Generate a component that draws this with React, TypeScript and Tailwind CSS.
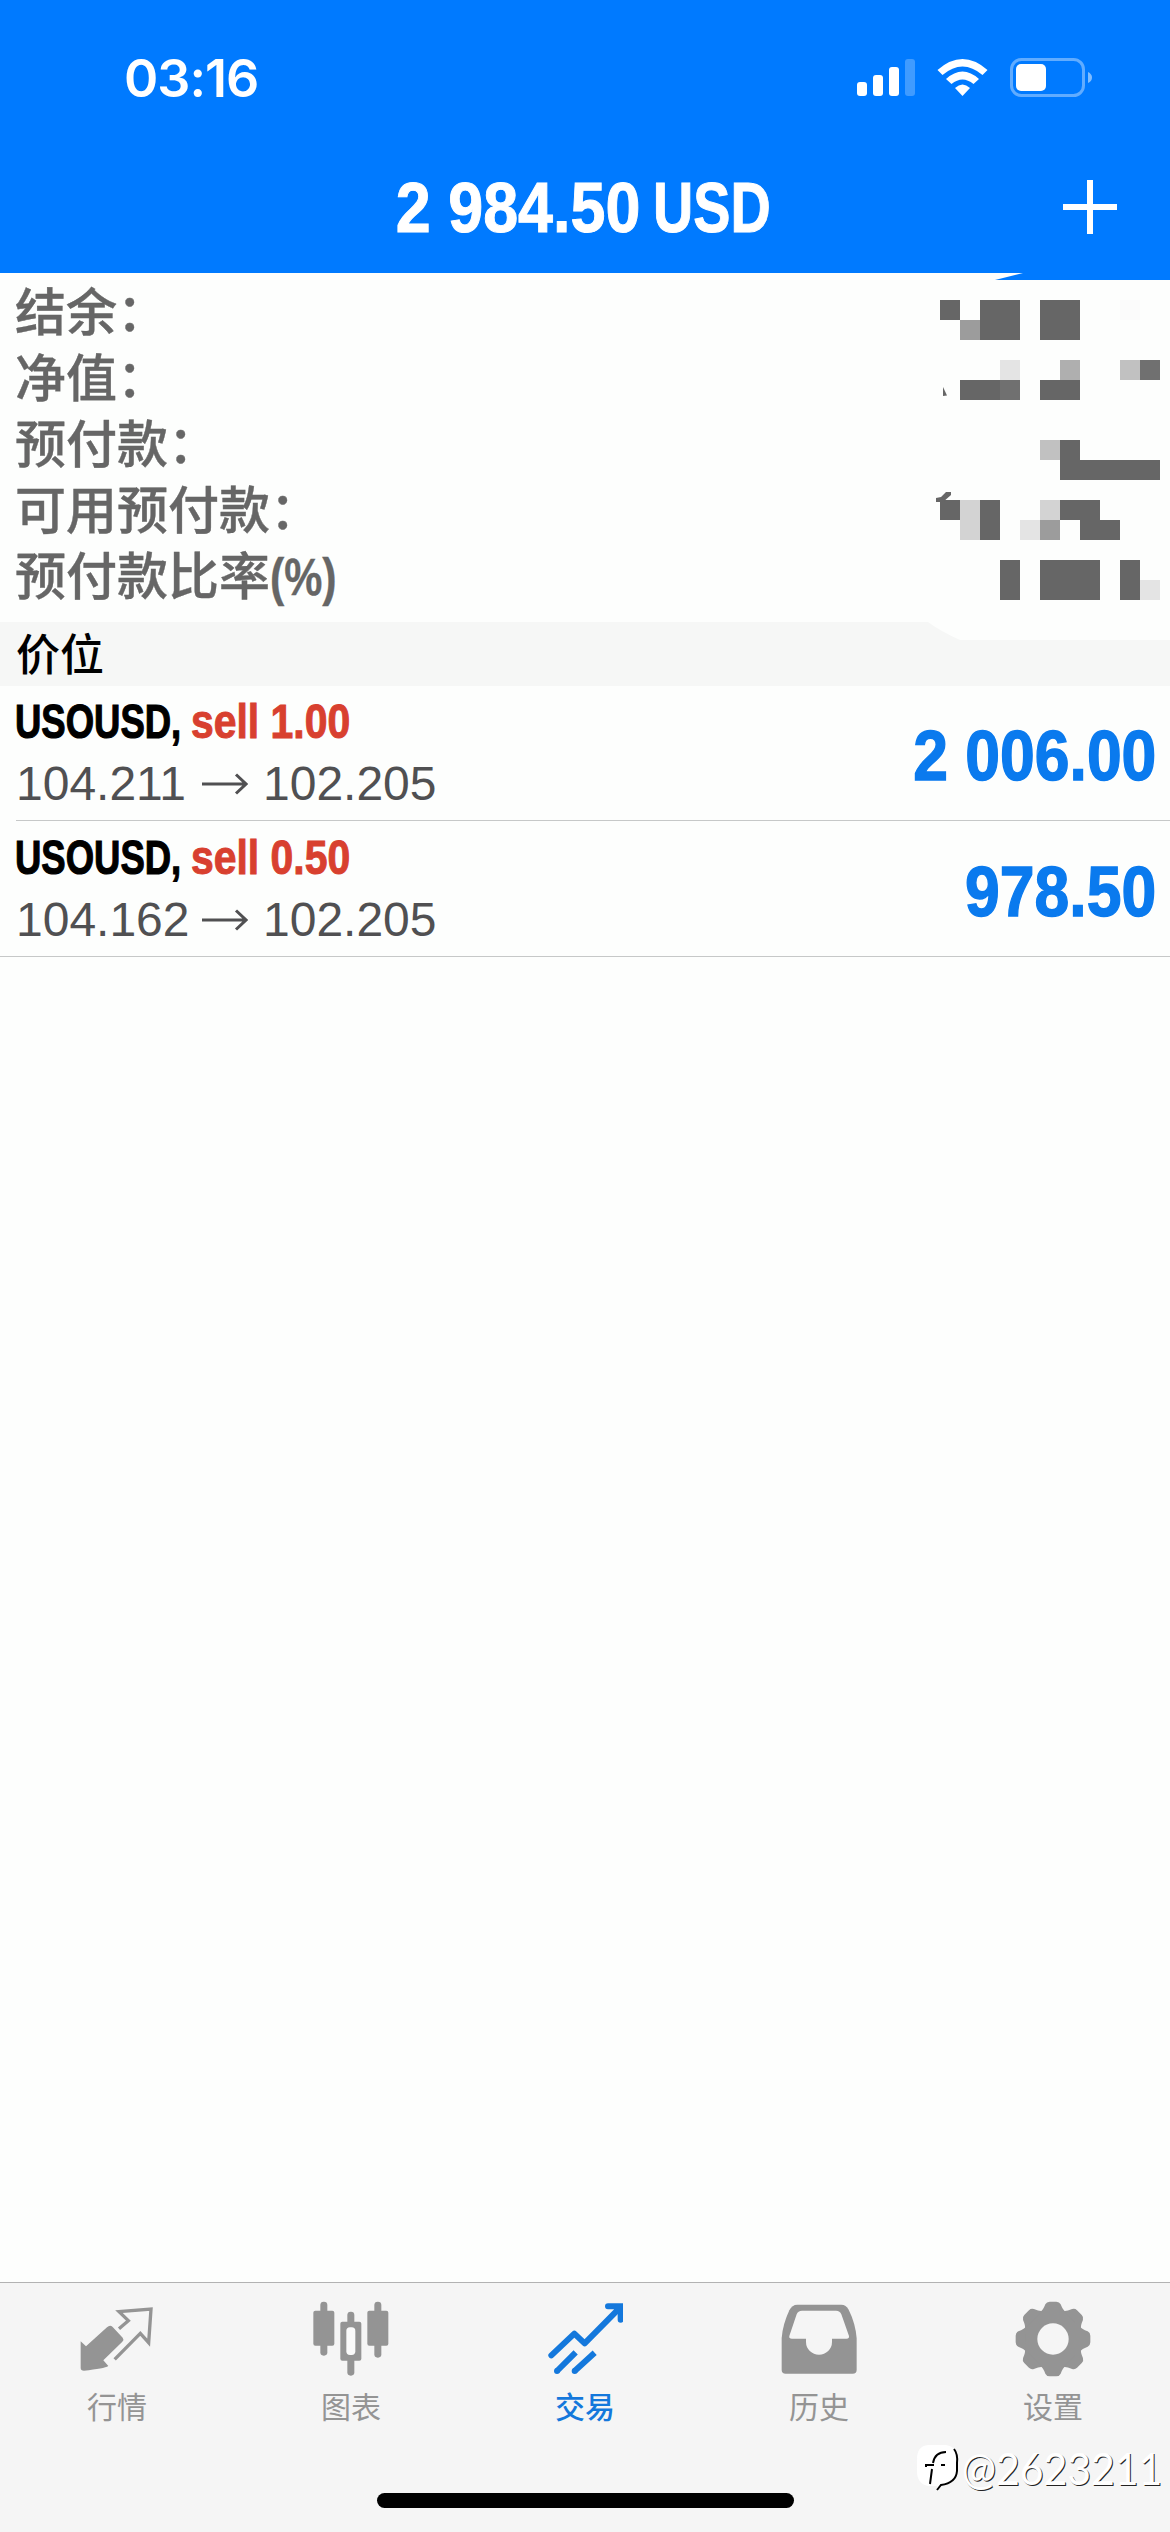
import type { ReactNode } from 'react';
import clsx from 'clsx';

const ACCOUNT = ['结余：', '净值：', '预付款：', '可用预付款：', '预付款比率'];

const POSITIONS = [
  { symbol: 'USOUSD,', side: 'sell 1.00', open: '104.211', now: '102.205', profit: '2 006.00' },
  { symbol: 'USOUSD,', side: 'sell 0.50', open: '104.162', now: '102.205', profit: '978.50' },
];

const TABS = [
  { label: '行情', icon: <QuotesIcon /> },
  { label: '图表', icon: <ChartIcon /> },
  { label: '交易', icon: <TradeIcon />, active: true },
  { label: '历史', icon: <HistoryIcon /> },
  { label: '设置', icon: <SettingsIcon /> },
];

// one string per mosaic line: [y, 11 cells]
const SHADES: Record<string, string> = { x: '#666666', y: '#707070', g: '#9c9c9c', h: '#afafaf', c: '#c1c1c1', l: '#d3d3d3', w: '#e4e4e4', f: '#fbfbfb' };
const MOSAIC: [number, string][] = [
  [300, 'x.xx.xx..f.'],
  [320, '.gxx.xx....'],
  [360, '...w..h..cy'],
  [380, '.xxy.xx....'],
  [440, '.....cx....'],
  [460, '......xxxxx'],
  [500, 'xlx..lxx...'],
  [520, '.lx.wg.xx..'],
  [560, '...x.xxx.x.'],
  [580, '...x.xxx.xw'],
];

function StatusIcons() {
  return (
    <svg width="240" height="44" viewBox="853 56 240 44" fill="#fff">
      <rect x="856" y="82" width="10" height="14" rx="3" />
      <rect x="872" y="75" width="10" height="21" rx="3" />
      <rect x="888" y="67" width="10" height="29" rx="3" />
      <rect x="904" y="59" width="10" height="37" rx="3" opacity=".25" />
      <path d="M936.5 70Q961.500 48 986.500 70L981.500 75Q961.500 58 941.500 75Z" />
      <path d="M945 79Q961.500 64 978 79L972.500 84Q961.500 75 950.500 84Z" />
      <path d="M954 88Q961.500 81 969 88L961.500 96Z" />
      <rect x="1010.500" y="59.500" width="72" height="36" rx="10" fill="none" stroke="#fff" strokeWidth="3" opacity=".38" />
      <rect x="1015" y="64" width="30" height="27" rx="5" />
      <path d="M1087 72q4 2 4 5.500t-4 5.500z" opacity=".5" />
    </svg>
  );
}

function TabIcon({ box, children }: { box: string; children: ReactNode }) {
  return <svg width="76" height="76" viewBox={box} fill="currentColor">{children}</svg>;
}

function QuotesIcon() {
  return (
    <TabIcon box="115 94 228 228">
      <path d="M120 215L136 230L199 173Q208 164 216 172L246 204Q251 210 245 216L188 272L203 289Q190 297 130 303Q120 303 120 295Z" />
      <path d="M235 177L263 153L235 126L331 118L324 219L299 191L222 269" fill="none" stroke="currentColor" strokeWidth="10" />
    </TabIcon>
  );
}

function ChartIcon() {
  return (
    <TabIcon box="818 94 228 228">
      <rect x="840" y="96" width="21" height="162" rx="10" />
      <rect x="819" y="123" width="63" height="105" rx="6" />
      <rect x="921" y="126" width="21" height="192" rx="10" />
      <rect x="900" y="156" width="63" height="117" rx="6" />
      <rect x="918" y="173" width="27" height="83" rx="11" fill="#fafafa" />
      <rect x="1002" y="96" width="21" height="168" rx="10" />
      <rect x="981" y="123" width="63" height="105" rx="6" />
    </TabIcon>
  );
}

function TradeIcon() {
  return (
    <TabIcon box="136 94 228 228">
      <g fill="none" stroke="currentColor" strokeWidth="18" strokeLinejoin="round">
        <path d="M149 257L218 192L249 221L352 117" strokeLinecap="round" />
        <path d="M319 110H357V150" strokeLinecap="round" strokeLinejoin="miter" />
        <path d="M166 304L222 248M219 304L279 249" />
      </g>
      <path d="M328 110H362V146Z" />
      <circle cx="166" cy="304" r="9" />
      <circle cx="219" cy="304" r="9" />
    </TabIcon>
  );
}

function HistoryIcon() {
  return (
    <TabIcon box="841 94 228 228">
      <path d="M843 205Q846 165 866 122Q874 105 890 105H1022Q1036 105 1044 120Q1064 160 1068 205V300Q1068 312 1056 312H855Q843 312 843 300Z" />
      <path d="M866 199L888 134Q892 123 904 123H1006Q1018 123 1022 134L1045 199Q1046 207 1038 207H994V217A39 38 0 0 1 916 217V207H874Q864 207 866 199Z" fill="#f5f5f5" />
    </TabIcon>
  );
}

function SettingsIcon() {
  return (
    <TabIcon box="-114 -114 228 228">
      <circle r="90" />
      {[0, 45, 90, 135, 180, 225, 270, 315].map(a => (
        <path key={a} transform={`rotate(${a})`} d="M-37 -82Q-30 -86 -23 -104Q-19 -112 -10 -112H10Q19 -112 23 -104Q30 -86 37 -82Z" />
      ))}
      <circle r="47" fill="#f5f5f5" />
    </TabIcon>
  );
}

export default function App() {
  return (
    <div className="relative flex h-[2532px] w-[1170px] flex-col overflow-hidden bg-[#fdfefd] font-['Liberation_Sans','Noto_Sans_CJK_SC',sans-serif]">
      <header className="h-[273px] shrink-0 bg-[#007aff] text-white">
        <div className="flex h-[156px] items-center justify-between pl-[124px] pr-[76px]">
          <span className="pt-[2px] font-['Inter',sans-serif] text-[52px] font-semibold tracking-[-1px]">03:16</span>
          <StatusIcons />
        </div>
        <div className="grid h-[102px] grid-cols-[120px_1fr_120px] items-center">
          <span />
          <h1 className="flex justify-center gap-[13px] pr-[3px] text-[71px] leading-none font-bold whitespace-nowrap [-webkit-text-stroke:1px_#fff]">
            <span className="origin-right scale-x-[0.885]">2 984.50</span>
            <span className="origin-left scale-x-[0.785]">USD</span>
          </h1>
          <svg width="54" height="54" viewBox="0 0 54 54" className="ml-[13px]" stroke="#fff" strokeWidth="6">
            <path d="M27 0V54M0 27H54" />
          </svg>
        </div>
      </header>

      <section className="h-[349px] shrink-0 pt-[8px] pl-[15px] text-[51px] text-[#666] [-webkit-text-stroke:0.4px_#666]">
        {ACCOUNT.map((label, i) => (
          <div key={label} className="flex h-[66px] items-center leading-[66px] font-medium">
            {label}
            {i === 4 && <span className="origin-left scale-x-[0.84] font-bold">(%)</span>}
          </div>
        ))}
      </section>

      <div className="flex h-[64px] shrink-0 items-center bg-[#f6f7f6] pt-[3px] pl-[16px] text-[44px] font-medium text-black">
        价位
      </div>

      <ul>
        {POSITIONS.map((p, i) => (
          <li key={p.open} className={clsx('flex pl-4', i === 0 ? 'h-[135px]' : 'h-[136px] border-b border-[#c6c8c8]')}>
            <div className={clsx('flex flex-1 items-center justify-between pr-[14px]', i === 0 && 'border-b border-[#c6c8c8]')}>
              <div>
                <div className="-ml-px flex h-[62px] items-center text-[48px] leading-none font-bold whitespace-nowrap">
                  <span className="w-[176px] origin-left scale-x-[0.76] text-black [-webkit-text-stroke:1.2px_#000]">{p.symbol}</span>
                  <span className="origin-left scale-x-[0.852] text-[#d8402f] [-webkit-text-stroke:1px_#d8402f]">{p.side}</span>
                </div>
                <div className="flex h-[62px] items-center text-[48px] leading-none text-[#505052]">
                  <span className="w-[186px]">{p.open}</span>
                  <svg width="46" height="22" viewBox="0 0 46 22" className="mr-[15px]" fill="none" stroke="currentColor" strokeWidth="3">
                    <path d="M0 11H44M34 1.500L44 11L34 20.500" />
                  </svg>
                  <span>{p.now}</span>
                </div>
              </div>
              <span className="origin-right scale-x-[0.88] pt-[5px] text-[71px] leading-none font-bold text-[#0a7aee] [-webkit-text-stroke:1.4px_#0a7aee]">{p.profit}</span>
            </div>
          </li>
        ))}
      </ul>

      <nav className="mt-auto h-[250px] shrink-0 border-t border-[#b2b2b2] bg-[#f5f5f5]">
        <div className="grid grid-cols-5">
          {TABS.map(t => (
            <div key={t.label} className={clsx('flex flex-col items-center pt-[18px]', t.active ? 'text-[#1478dc]' : 'text-[#949494]')}>
              {t.icon}
              <span className={clsx('mt-[9px] text-[30px] leading-[44px]', t.active && 'font-medium')}>{t.label}</span>
            </div>
          ))}
        </div>
        <div className="mx-auto mt-[63px] h-[15px] w-[417px] rounded-full bg-black" />
      </nav>

      {/* hidden amounts */}
      <svg className="absolute top-[273px] right-0" width="244" height="368" viewBox="926 273 244 368">
        <path d="M928 606L928 622Q940 631 960 640H1170V600Z" fill="#fdfefd" />
        <path d="M995 280L1023 273H1170V280Z" fill="#007aff" />
        <g shapeRendering="crispEdges">
          {MOSAIC.map(([y, cells]) =>
            cells.split('').map((c, i) => c !== '.' && (
              <rect key={`${y}-${i}`} x={940 + i * 20} y={y} width="20" height="20" fill={SHADES[c]} />
            ))
          )}
        </g>
        <path d="M943 387L947 395.500L943 396Z" fill="#666" />
        <path d="M936 498L941 497L946 492H951V495L943 502H936Z" fill="#666" />
      </svg>

      {/* watermark */}
      <div className="absolute right-[8px] bottom-[39px] flex items-center text-white">
        <svg width="46" height="50" viewBox="0 0 46 50" className="mr-[-20px]">
          <path d="M12 2H30Q42 4 42 18V26Q42 38 26 43L21 48V43H12Q1 41 1 28V16Q1 3 12 2Z" fill="#fff" />
          <g fill="none" stroke="#000" strokeWidth="2">
            <path d="M14 41L16 26M17 20Q19 9 30 9M10 24V22H18M25 22H29" />
            <path d="M38 6Q42 11 41 20V28Q40 40 25 42L21 47" />
          </g>
        </svg>
        <span className="origin-right scale-x-[0.91] font-['Lato',sans-serif] text-[45px] leading-[50px] font-normal [text-shadow:1px_1px_0_#222]">@2623211</span>
      </div>
    </div>
  );
}
